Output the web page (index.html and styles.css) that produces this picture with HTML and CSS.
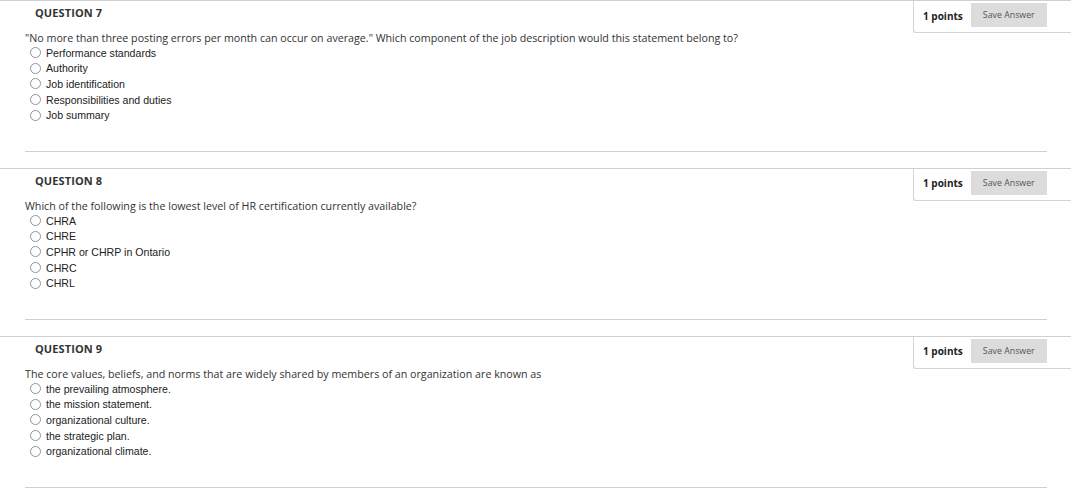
FILE: index.html
```html
<!DOCTYPE html>
<html lang="en">
<head>
<meta charset="utf-8">
<title>Quiz</title>
<link rel="stylesheet" href="styles.css">
</head>
<body>
<div class="page">
  <section class="question">
    <div class="q-head">
      <h2 class="q-title">QUESTION 7</h2>
      <div class="points-box">
        <span class="points">1 points</span>
        <button class="save-btn">Save Answer</button>
      </div>
    </div>
    <div class="q-body">
      <p class="q-text">"No more than three posting errors per month can occur on average." Which component of the job description would this statement belong to?</p>
      <ul class="options">
        <li class="option"><span class="radio"></span>Performance standards</li>
        <li class="option"><span class="radio"></span>Authority</li>
        <li class="option"><span class="radio"></span>Job identification</li>
        <li class="option"><span class="radio"></span>Responsibilities and duties</li>
        <li class="option"><span class="radio"></span>Job summary</li>
      </ul>
      <hr class="sep">
    </div>
  </section>
  <section class="question">
    <div class="q-head">
      <h2 class="q-title">QUESTION 8</h2>
      <div class="points-box">
        <span class="points">1 points</span>
        <button class="save-btn">Save Answer</button>
      </div>
    </div>
    <div class="q-body">
      <p class="q-text">Which of the following is the lowest level of HR certification currently available?</p>
      <ul class="options">
        <li class="option"><span class="radio"></span>CHRA</li>
        <li class="option"><span class="radio"></span>CHRE</li>
        <li class="option"><span class="radio"></span>CPHR or CHRP in Ontario</li>
        <li class="option"><span class="radio"></span>CHRC</li>
        <li class="option"><span class="radio"></span>CHRL</li>
      </ul>
      <hr class="sep">
    </div>
  </section>
  <section class="question">
    <div class="q-head">
      <h2 class="q-title">QUESTION 9</h2>
      <div class="points-box">
        <span class="points">1 points</span>
        <button class="save-btn">Save Answer</button>
      </div>
    </div>
    <div class="q-body">
      <p class="q-text">The core values, beliefs, and norms that are widely shared by members of an organization are known as</p>
      <ul class="options">
        <li class="option"><span class="radio"></span>the prevailing atmosphere.</li>
        <li class="option"><span class="radio"></span>the mission statement.</li>
        <li class="option"><span class="radio"></span>organizational culture.</li>
        <li class="option"><span class="radio"></span>the strategic plan.</li>
        <li class="option"><span class="radio"></span>organizational climate.</li>
      </ul>
      <hr class="sep">
    </div>
  </section>
</div>
</body>
</html>
```
FILE: styles.css
```css
html, body {
  margin: 0;
  padding: 0;
  background: #fff;
}
body {
  font-family: "Open Sans", "Liberation Sans", sans-serif;
  color: #333;
}
.page {
  width: 1071px;
}
.question {
  border-top: 1px solid #cfcfcf;
}
.q-head {
  display: flex;
  justify-content: space-between;
  height: 32px;
}
.q-title {
  margin: 0;
  padding: 4px 0 0 35px;
  font-size: 11px;
  line-height: 15px;
  font-weight: 700;
  color: #333;
  letter-spacing: 0.1px;
}
.points-box {
  width: 158px;
  height: 32px;
  box-sizing: border-box;
  border-left: 1px solid #d4d4d4;
  border-bottom: 1px solid #d4d4d4;
  border-bottom-left-radius: 3px;
  display: flex;
  align-items: center;
  padding: 0 0 2px 9px;
  gap: 8px;
}
.points {
  font-size: 10px;
  font-weight: 700;
  color: #222;
}
.save-btn {
  width: 76px;
  height: 24px;
  border: none;
  background: #dcdcdc;
  color: #555;
  font-family: "Open Sans", "Liberation Sans", sans-serif;
  font-size: 8.8px;
  padding: 0;
  margin-top: -1px;
}
.q-body {
  padding-left: 25px;
}
.q-text {
  margin: -1px 0 1px;
  font-size: 10.7px;
  line-height: 12px;
  color: #333;
}
.options {
  list-style: none;
  margin: 0;
  padding: 0 0 0 5px;
}
.option {
  display: flex;
  align-items: center;
  height: 15.6px;
  font-family: "Liberation Sans", Arial, sans-serif;
  font-size: 10.6px;
  color: #222;
}
.radio {
  width: 9px;
  height: 9px;
  border: 1px solid #949494;
  border-radius: 50%;
  background: #fff;
  margin-right: 5px;
  flex: none;
}
.sep {
  margin: 28px 0 16px;
  width: 1022px;
  height: 0;
  border: none;
  border-top: 1px solid #cfcfcf;
}
```
